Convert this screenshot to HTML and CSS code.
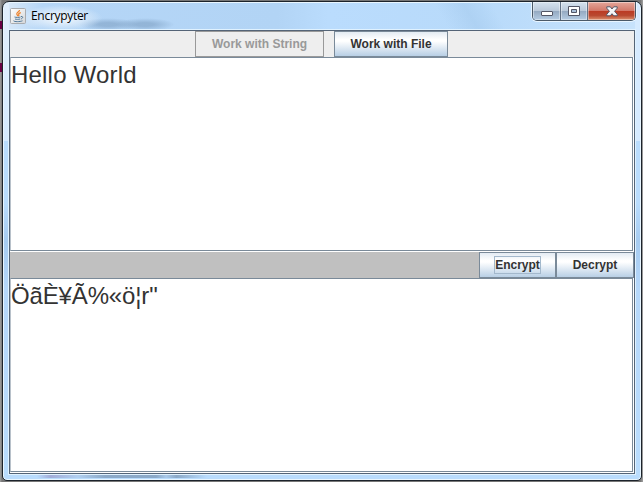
FILE: index.html
```
<!DOCTYPE html>
<html lang="en">
<head>
<meta charset="utf-8">
<title>Encrypyter</title>
<link rel="stylesheet" href="styles.css">
</head>
<body>
<main class="window">
  <header class="titlebar">
    <svg class="app-icon" width="16" height="16" viewBox="0 0 16 16">
      <defs><linearGradient id="tile" x2="1" y2="1"><stop stop-color="#fff"/><stop offset="1" stop-color="#d4d6d8"/></linearGradient></defs>
      <rect x=".5" y=".5" width="15" height="15" rx="1" fill="url(#tile)" stroke="#a9abae"/>
      <path d="M9.500 2c.3 1.800-3.300 2.400-2.700 4.200.2.700 1 1.200 1.100 1.900M10.800 4.600C9 5.200 8.200 5.800 8.800 6.600c.4.600.1 1.100-.4 1.500" fill="none" stroke="#ee8128" stroke-width="1.200"/>
      <path d="M4.500 9c1.500.6 4.600.5 6 0M5 11c1.500.5 3.500.5 5 0M11 8.500c2.400-.5 2.200 1.900-.2 2.500M3.500 12.800c.8 1.100 6.500 1.100 9 0" fill="none" stroke="#527a9b" stroke-width="1"/>
    </svg>
    <h1 class="title">Encrypyter</h1>
    <div class="captions">
      <span class="caption minimize"><svg width="12" height="5"><rect x=".5" y=".5" width="11" height="4" rx=".5" fill="#fff" stroke="#535666"/></svg></span>
      <span class="caption maximize"><svg width="12" height="10"><path d="M.5.500h11v9H.5z" fill="#fff" stroke="#535666"/><path d="M3.500 3.500h5v3h-5z" fill="#a9bfd8" stroke="#535666"/></svg></span>
      <span class="caption close"><svg width="12" height="11" viewBox="0 0 12 11"><path d="M.8.800h3.500L6 3 7.700.8h3.500v1.400L8.600 5.300l2.600 3v1.500H7.700L6 7.700 4.300 9.800H.8V8.300l2.600-3L.8 2.200z" fill="#f5f5f7" stroke="#535666"/></svg></span>
    </div>
  </header>
  <section class="client">
    <nav class="modes">
      <button class="button mode-string" disabled>Work with String</button>
      <button class="button mode-file">Work with File</button>
    </nav>
    <div class="pane source">Hello World</div>
    <div class="actions">
      <button class="button action"><span class="focus">Encrypt</span></button>
      <button class="button action">Decrypt</button>
    </div>
    <div class="pane result">ÖãÈ¥Ã%«ö¦r"</div>
  </section>
</main>
</body>
</html>
```
FILE: styles.css
```
* { box-sizing: border-box; }
body {
  margin: 0;
  width: 643px;
  height: 482px;
  padding: 1px 1px 1px 2px;
  overflow: hidden;
  background:
    linear-gradient(#690044, #690044) 0 21px / 2px 8px no-repeat,
    linear-gradient(#690044, #690044) 0 63px / 2px 9px no-repeat,
    linear-gradient(90deg, #a1a1a1, #777 2px, #777 641px, #999 642px);
  font-family: "Liberation Sans", Arial, sans-serif;
}
.window {
  width: 640px;
  height: 480px;
  padding: 0 5px;
  border: 1px solid #1c232b;
  border-radius: 7px 7px 5px 5px;
  box-shadow: inset 0 0 0 1px #e9f6ff;
  background:
    linear-gradient(90deg, transparent, #a2add9 8%, #b0cff0 24%, #8ba9c8 40%, #8ba9c8 70%, #a9c9e9 76%, #8ba9c8 82%, transparent) 34px 473px / 170px 3px no-repeat,
    radial-gradient(ellipse, #f2f7fccc 20%, transparent 70%) 15px 3px / 85px 26px no-repeat,
    radial-gradient(ellipse, #83a5c8aa 20%, transparent 70%) 75px 16px / 60px 13px no-repeat,
    radial-gradient(ellipse, #83a5c8aa 20%, transparent 70%) 112px 16px / 60px 13px no-repeat,
    linear-gradient(60deg, transparent 35%, #9fc5e966 62%, transparent 88%) 410px 0 / 90px 30px no-repeat,
    linear-gradient(#e1eefb, #d5eaff) 0 0 / 6px 139px no-repeat,
    linear-gradient(#d5eaff, #d5eaff) 100% 0 / 6px 139px no-repeat,
    linear-gradient(90deg, #dceaf8, #b5d6f7 40px, #b2d4f5 43%, #badcfd 51%, #b8dafa 75%, #c8e3fc) 0 0 / 100% 30px no-repeat,
    linear-gradient(#b9dcfd 42%, #a6cbf0 50%, #b5d7fa 60%, #b9dcfd);
}
.titlebar { display: flex; height: 27px; padding-left: 2px; }
.app-icon { margin-top: 6px; flex: none; }
.title {
  margin: 6px 0 0 5px;
  color: #000;
  font: 12px/16px "Open Sans", "Noto Sans", sans-serif;
  letter-spacing: -.3px;
}
.captions {
  display: flex;
  width: 104px;
  height: 19px;
  margin: 0 0 0 auto;
  border: 1px solid #4b5968;
  border-top: 0;
  border-radius: 0 0 5px 5px;
  box-shadow: 0 0 0 1px #e9f5ff;
  clip-path: inset(0 -2px -2px -2px);
  overflow: hidden;
}
.caption {
  display: flex;
  align-items: center;
  justify-content: center;
  width: 28px;
  border-right: 1px solid #637387;
  background: linear-gradient(#d5e2ef, #bac9da 48%, #95aac2 52%, #b5cce3);
  box-shadow: inset 0 0 0 1px #ffffff66;
}
.maximize { width: 27px; }
.minimize svg { margin-top: 5px; }
.close {
  width: 47px;
  border: 0;
  background: linear-gradient(#e4a69a, #d27869 48%, #bb3b24 52%, #b94930 75%, #dc9270);
}
.client {
  display: flex;
  flex-direction: column;
  width: 628px;
  height: 446px;
  border: 1px solid #e0f2ff;
  outline: 1px solid #546477;
  outline-offset: -2px;
  padding: 1px;
  background: #fff;
}
.modes {
  display: flex;
  flex: none;
  justify-content: center;
  gap: 10px;
  height: 26px;
  padding-right: 1px;
  background: #eee;
}
.button {
  height: 26px;
  padding: 0;
  border: 1px solid #7a8a99;
  background: linear-gradient(#e3ebf3, #fff 32%, #fff 38%, #b8cfe5);
  color: #333;
  font: bold 12px/16px "Liberation Sans", Arial, sans-serif;
}
.button:disabled { border-color: #999; background: #eee; color: #999; }
.mode-string { width: 129px; }
.mode-file { width: 114px; }
.pane {
  flex: none;
  width: 623px;
  height: 194px;
  border: 1px solid #7a8a99;
  border-left-color: #b8c1ca;
  background: #fff;
  color: #333;
  font-size: 24px;
  line-height: 34px;
}
.source { letter-spacing: .2px; }
.result { letter-spacing: -.15px; }
.actions {
  display: flex;
  flex: none;
  justify-content: flex-end;
  height: 26px;
  margin-top: 1px;
  background: #c0c0c0;
}
.action { width: 77px; }
.action + .action { width: 78px; }
.focus { display: inline-block; height: 18px; line-height: 16px; border: 1px solid #a3b8cc; }
```
